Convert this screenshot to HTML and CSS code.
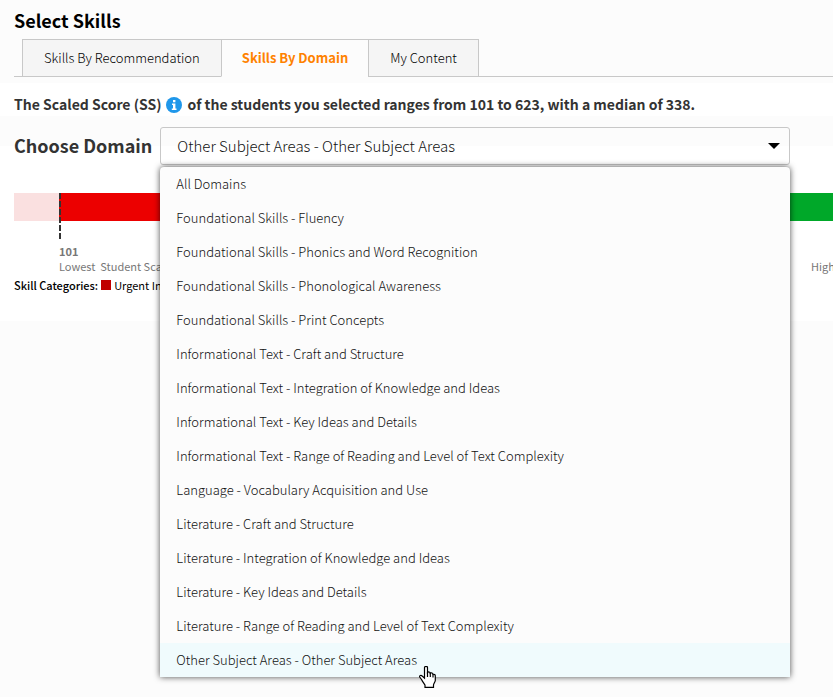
FILE: index.html
```html
<!DOCTYPE html>
<html lang="en">
<head>
    <meta charset="UTF-8">
    <meta name="viewport" content="width=device-width, initial-scale=1.0">
    <title>Select Skills</title>
    <link rel="stylesheet" href="styles.css">
</head>
<body>
    <header>
        <h1>Select Skills</h1>
        <nav class="tabs">
            <button type="button" class="tab">Skills By Recommendation</button>
            <button type="button" class="tab active">Skills By Domain</button>
            <button type="button" class="tab">My Content</button>
        </nav>
    </header>

    <p class="score">
        The Scaled Score (SS)
        <svg class="info" viewBox="0 0 16 16" role="img" aria-label="Info">
            <circle cx="8" cy="8" r="8" fill="#1f97ea"/>
            <path d="M7 3h2.4v2.2H7zM6 6.5h3.4v5h1.1V13H5.800v-1.500H7V8H6z" fill="#fff"/>
        </svg>
        of the students you selected ranges from 101 to 623, with a median of 338.
    </p>

    <div class="domain">
        <label for="domain">Choose Domain</label>
        <div class="dropdown">
            <select id="domain">
                <option>Other Subject Areas - Other Subject Areas</option>
            </select>
            <svg class="arrow" viewBox="0 0 12 6"><path d="M0 0h12L6 6z"/></svg>
            <ul class="menu" role="listbox" aria-label="Domains">
                <li role="option">All Domains</li>
                <li role="option">Foundational Skills - Fluency</li>
                <li role="option">Foundational Skills - Phonics and Word Recognition</li>
                <li role="option">Foundational Skills - Phonological Awareness</li>
                <li role="option">Foundational Skills - Print Concepts</li>
                <li role="option">Informational Text - Craft and Structure</li>
                <li role="option">Informational Text - Integration of Knowledge and Ideas</li>
                <li role="option">Informational Text - Key Ideas and Details</li>
                <li role="option">Informational Text - Range of Reading and Level of Text Complexity</li>
                <li role="option">Language - Vocabulary Acquisition and Use</li>
                <li role="option">Literature - Craft and Structure</li>
                <li role="option">Literature - Integration of Knowledge and Ideas</li>
                <li role="option">Literature - Key Ideas and Details</li>
                <li role="option">Literature - Range of Reading and Level of Text Complexity</li>
                <li role="option" class="selected" aria-selected="true">Other Subject Areas - Other Subject Areas</li>
            </ul>
            <svg class="pointer" viewBox="0 0 17 22">
                <path d="M5.500 1.500C5.500 0 8.500 0 8.500 1.500V6.500C9.500 5.500 11 6 11.200 7.200C12.500 6.500 13.800 7.200 14 8.300C15.300 8 16.300 8.800 16.300 10V14.500C16.300 16 14.500 17.500 14.500 19V21.300H6V19C5 17.500 3.500 15.500 2.500 13.500L.7 11C.2 9.500 2 8.800 3.200 10L5.500 12.200z" fill="#fff" stroke="#000" stroke-width="1.200"/>
                <path d="M8.500 6v5M11.300 7v4M14 8.200v3.300" fill="none" stroke="#000" stroke-width="1.200"/>
            </svg>
        </div>
    </div>

    <section class="chart">
        <div class="bar">
            <div class="below"></div>
            <div class="urgent"></div>
            <div class="on-watch"></div>
            <div class="above"></div>
        </div>
        <div class="labels">
            <div class="lowest"><b>101</b><br>Lowest&nbsp; Student Scaled Score</div>
            <div class="highest">Highest Student Scaled Score</div>
        </div>
        <div class="legend">
            <b>Skill Categories:</b>
            <span class="swatch"></span>
            <span>Urgent Intervention</span>
        </div>
    </section>
</body>
</html>
```

FILE: styles.css
```css
* {
    box-sizing: border-box;
}
body {
    font-family: "Noto Sans CJK SC", "Open Sans", sans-serif;
    margin: 0;
    min-height: 100vh;
    background-color: #fcfcfc;
    color: #333;
}
header {
    padding-left: 14px;
}
h1 {
    margin: 0;
    padding-top: 3px;
    font-size: 18px;
    line-height: 35px;
    color: #000;
}
.tabs {
    display: flex;
    margin-top: 1px;
    padding-left: 8px;
    height: 38px;
    box-shadow: inset 0 -1px #c8c8c8;
}
.tab {
    font-family: inherit;
    font-size: 13px;
    font-weight: 300;
    line-height: 20px;
    padding: 0 21px;
    border: 1px solid #c8c8c8;
    margin-right: -1px;
    background-color: #f5f5f5;
    color: #000;
    cursor: pointer;
}
.tab.active {
    background-color: #fcfcfc;
    border-bottom-color: #fcfcfc;
    color: #ff8200;
    font-weight: bold;
    padding: 0 20px;
}
.score {
    display: flex;
    align-items: center;
    gap: 5px;
    margin: 6px 0 0;
    padding: 10px 14px 0;
    font-size: 14px;
    line-height: 23px;
    font-weight: bold;
    white-space: nowrap;
    background-color: #fff;
}
.info {
    width: 16px;
    height: 16px;
}
.domain {
    display: flex;
    align-items: center;
    gap: 8px;
    padding: 11px 43px 0 14px;
    background: linear-gradient(#fcfcfc 30px, #fff 30px);
}
.domain label {
    font-size: 18px;
    line-height: 36px;
    padding-bottom: 2px;
    font-weight: bold;
}
.dropdown {
    position: relative;
    flex: 1;
}
.dropdown select {
    display: block;
    appearance: none;
    width: 100%;
    height: 38px;
    padding: 0 16px 2px;
    font-family: inherit;
    font-size: 15px;
    font-weight: 300;
    color: #111;
    background-color: transparent;
    border: 1px solid #c8c8c8;
    border-radius: 3px;
}
.arrow {
    position: absolute;
    top: 16px;
    right: 10px;
    width: 12px;
    height: 6px;
}
.menu {
    position: absolute;
    top: 40px;
    left: 0;
    right: 0;
    z-index: 1;
    margin: 0;
    padding: 0;
    list-style: none;
    background-color: #fcfcfc;
    border-radius: 4px 4px 0 0;
    box-shadow: 0 0 6px rgba(0, 0, 0, 0.7);
}
.menu li {
    padding: 0 16px;
    font-size: 13px;
    font-weight: 300;
    line-height: 34px;
    color: #111;
}
.menu .selected {
    background-color: #f0fbfd;
}
.pointer {
    position: absolute;
    top: 539px;
    left: 259px;
    z-index: 2;
    width: 17px;
    height: 22px;
}
.chart {
    padding: 28px 0 26px 14px;
    background-color: #fff;
}
.bar {
    display: flex;
    height: 28px;
}
.below {
    width: 45px;
    background-color: #fae0e0;
}
.urgent {
    flex: 2;
    background-color: #ec0000;
}
.on-watch {
    flex: 1;
    background-color: #ffd400;
}
.above {
    flex: 2;
    background-color: #00a829;
}
.labels {
    display: flex;
    justify-content: space-between;
    align-items: flex-end;
    font-size: 11px;
    line-height: 15px;
    color: #777;
    white-space: nowrap;
}
.lowest {
    position: relative;
    margin-left: 45px;
    padding-top: 23px;
}
.lowest::before {
    content: "";
    position: absolute;
    top: -28px;
    left: 0;
    width: 2px;
    height: 46px;
    background: repeating-linear-gradient(#333 0 6px, transparent 6px 8px);
}
.highest {
    width: 22px;
    overflow: hidden;
}
.legend {
    display: flex;
    align-items: center;
    gap: 3px;
    padding-top: 1px;
    font-size: 11px;
    line-height: 20px;
    color: #000;
}
.legend b {
    font-weight: 500;
}
.swatch {
    width: 10px;
    height: 10px;
    background-color: #c00000;
}
```
